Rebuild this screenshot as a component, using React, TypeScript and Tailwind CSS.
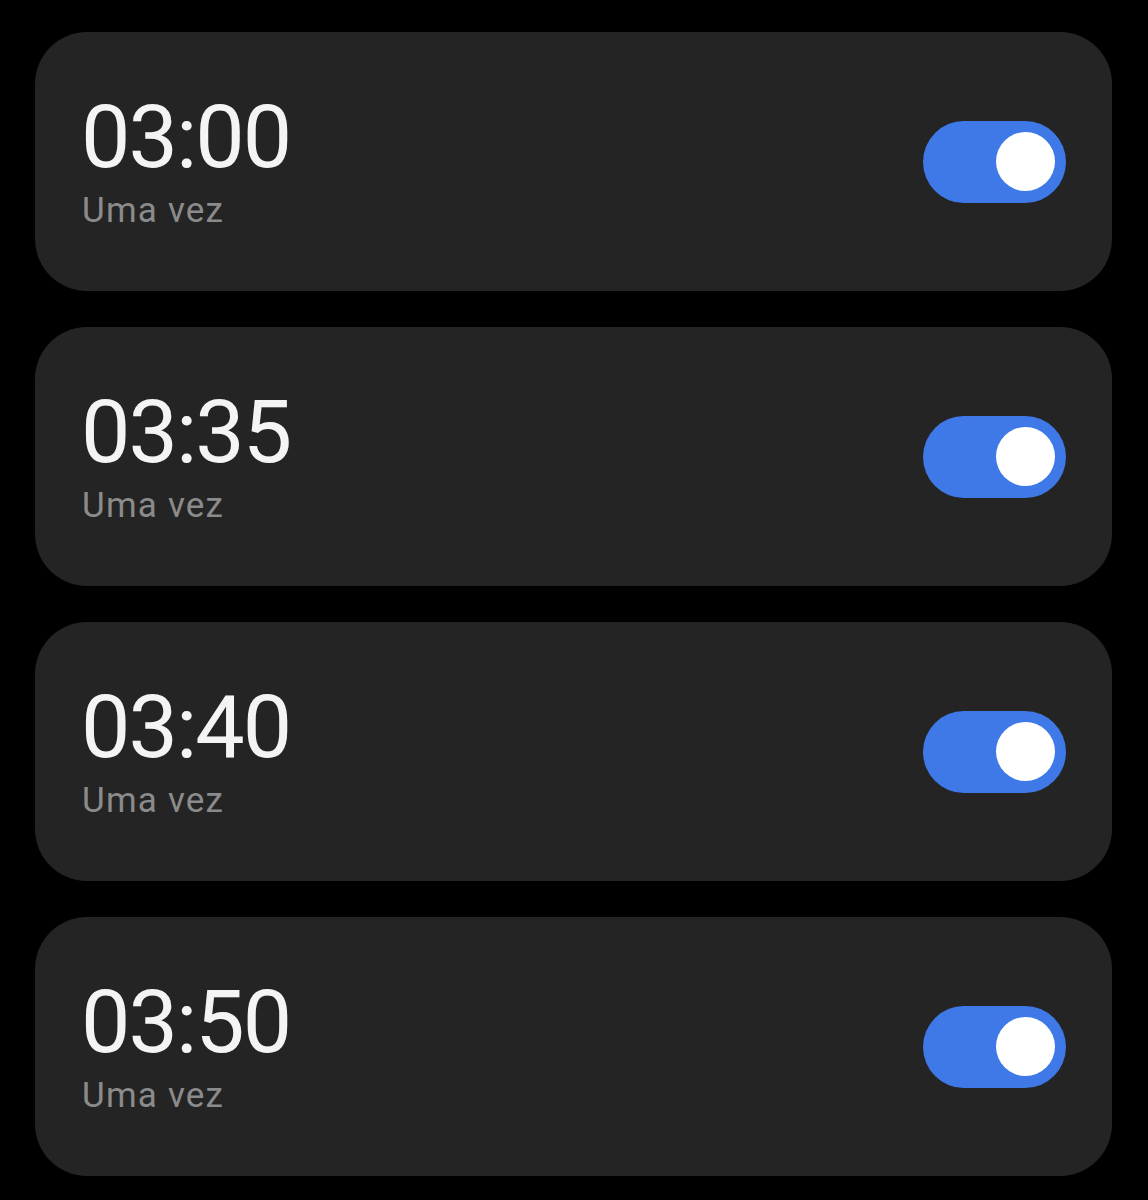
const ALARMS = [
  { id: 1, time: "03:00", repeat: "Uma vez", on: true },
  { id: 2, time: "03:35", repeat: "Uma vez", on: true },
  { id: 3, time: "03:40", repeat: "Uma vez", on: true },
  { id: 4, time: "03:50", repeat: "Uma vez", on: true },
];

export default function App() {
  return (
    <div className="min-h-[1200px] w-full bg-black pt-[32px] pb-[25px] pl-[35px] pr-[36px] font-['Roboto',sans-serif]">
      <div className="flex flex-col gap-[36px]">
        {ALARMS.map((alarm) => (
          <AlarmCard key={alarm.id} alarm={alarm} />
        ))}
      </div>
    </div>
  );
}

function AlarmCard({ alarm }: { alarm: (typeof ALARMS)[number] }) {
  return (
    <div className="flex h-[259px] items-center justify-between rounded-[52px] bg-[#242424] pl-[47px] pr-[46px]">
      <div className="flex flex-col">
        <span className="-ml-[1px] text-[88px] leading-none tracking-[-2px] text-[#f4f4f4]">{alarm.time}</span>
        <span className="mt-[10px] text-[35px] leading-[40px] tracking-[1.2px] text-[#8b8b8b]">{alarm.repeat}</span>
      </div>
      {/* toggle, always on in this screen */}
      <div className="flex h-[82px] w-[143px] items-center justify-end rounded-full bg-[#3e79e7] pr-[11px]">
        <div className="h-[59px] w-[59px] rounded-full bg-white" />
      </div>
    </div>
  );
}
